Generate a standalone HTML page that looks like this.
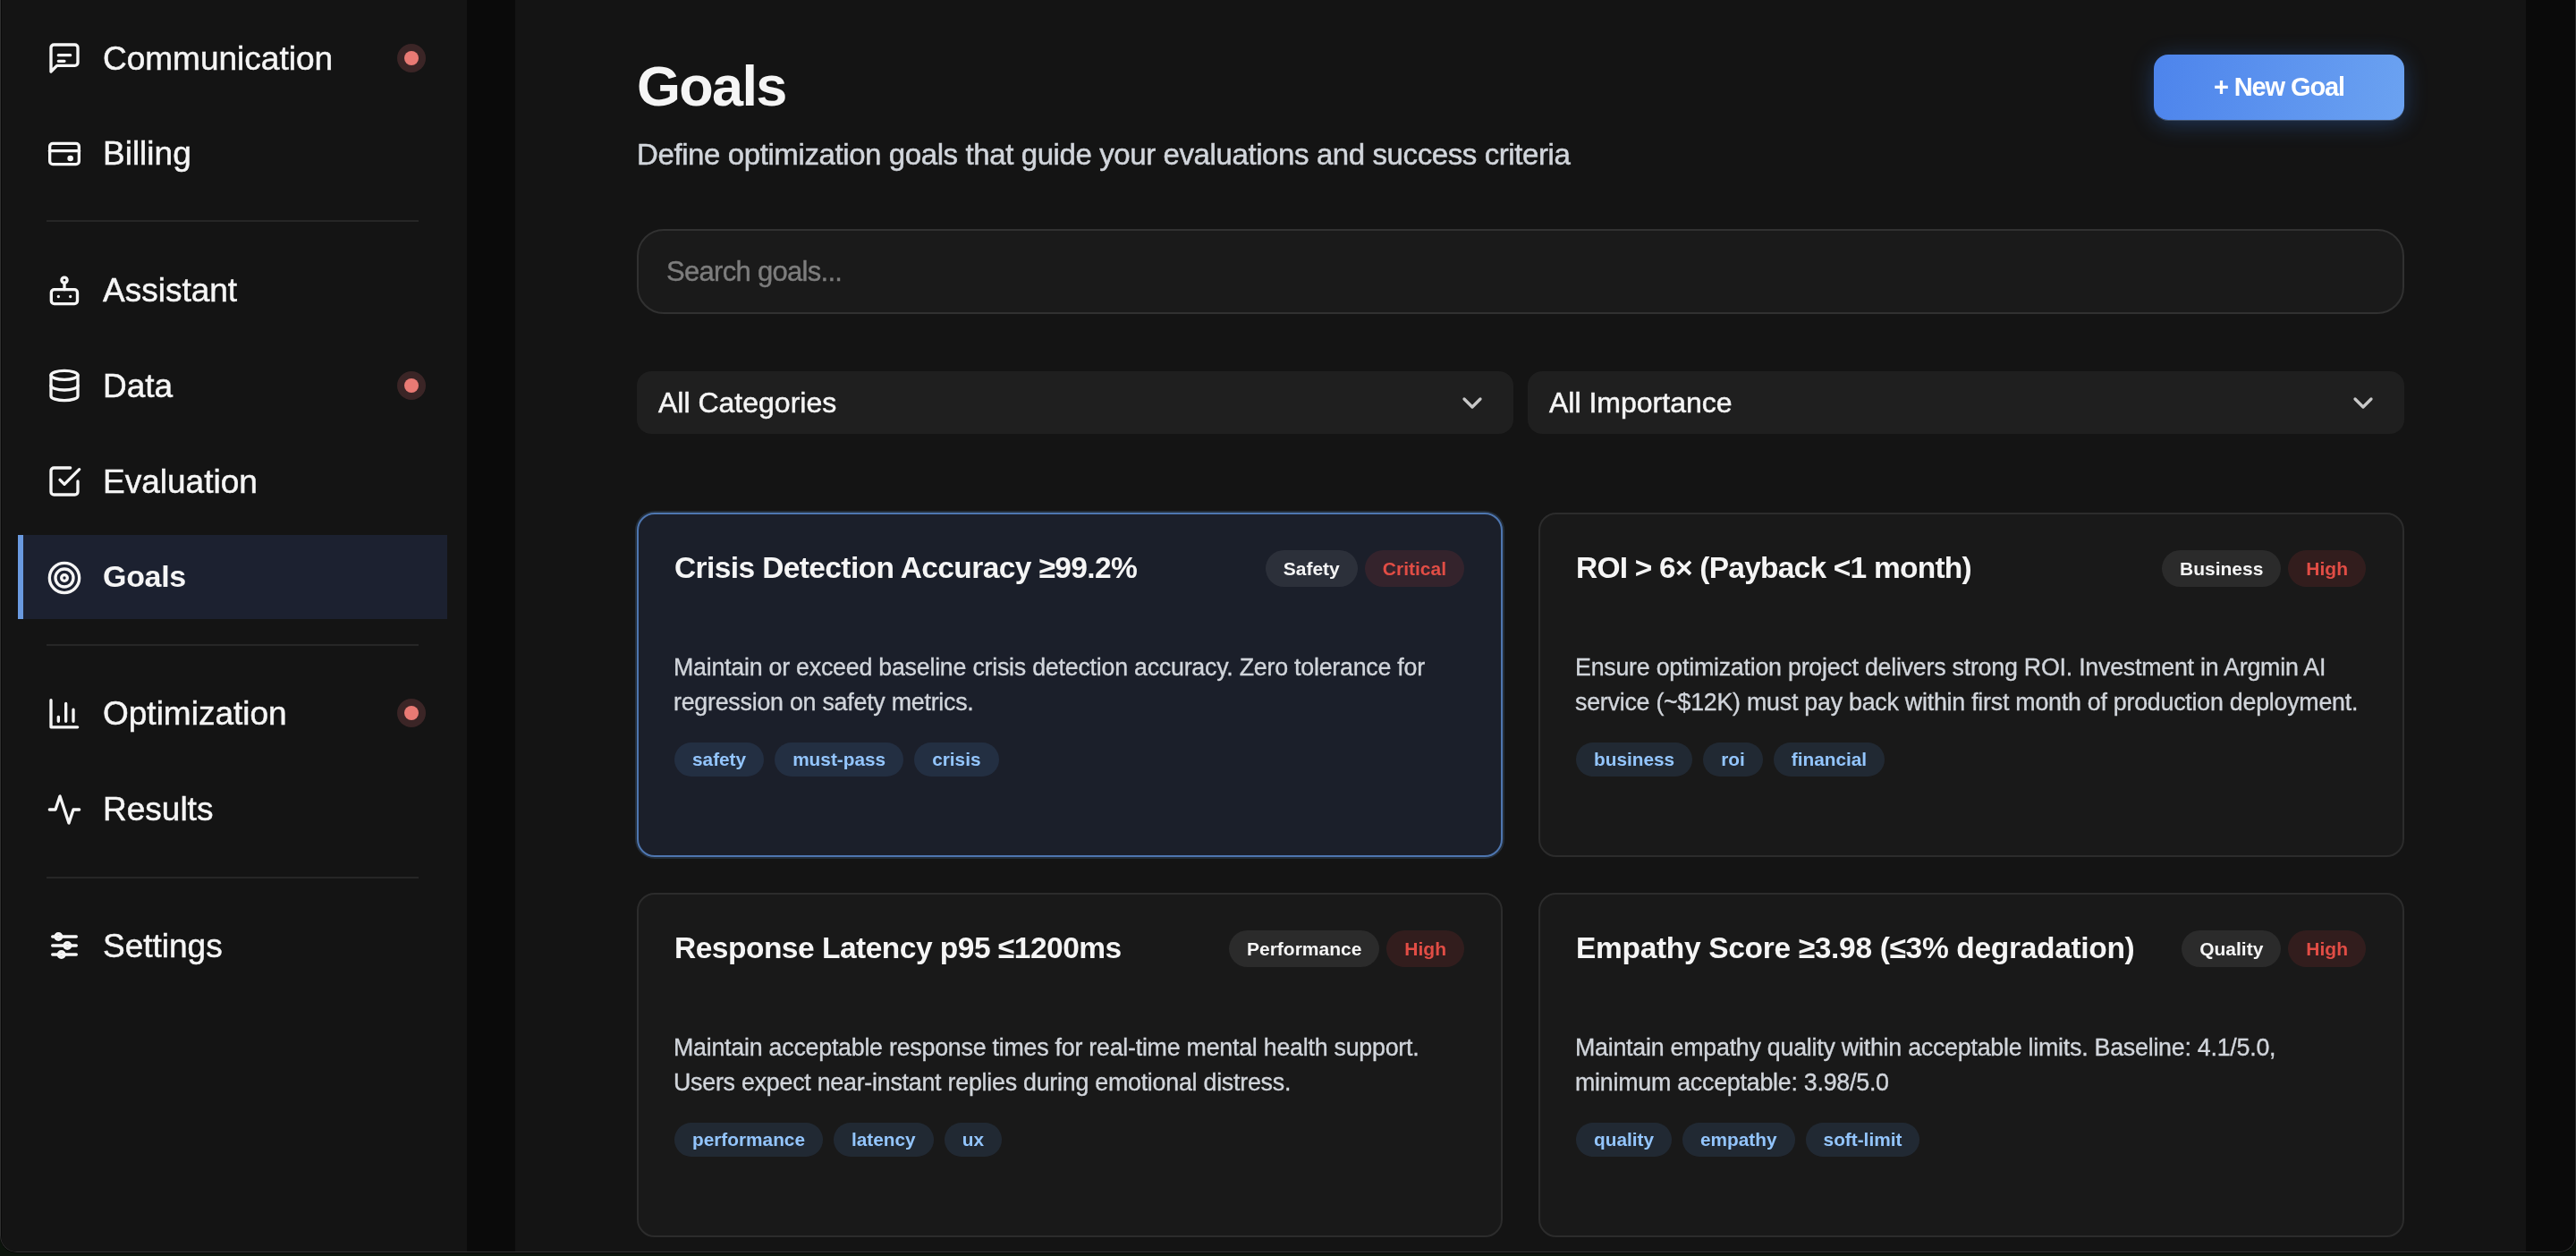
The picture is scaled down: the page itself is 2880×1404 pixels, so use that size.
<!DOCTYPE html>
<html><head><meta charset="utf-8">
<style>
*{margin:0;padding:0;box-sizing:border-box}
html,body{width:2880px;height:1404px;overflow:hidden;background:#0c140c;font-family:"Liberation Sans",sans-serif}
#win{will-change:transform;position:absolute;left:0;top:0;width:2880px;height:1400px;background:#0a0a0a;border:1px solid #303030;border-top:0;border-radius:0 0 19px 19px;overflow:hidden;box-shadow:0 1px 0 #050505}
#side{position:absolute;left:1px;top:0;width:520px;height:1399px;background:#141414}
#main{position:absolute;left:575px;top:0;width:2248px;height:1399px;background:#141414}
.nav{position:absolute;left:0;width:520px;height:94px;color:#f5f5f5;font-size:37px}
.nav .lbl{position:absolute;left:113px;top:2px;line-height:94px;white-space:nowrap}
.nav svg{position:absolute;left:50px;top:28px;width:40px;height:40px;fill:none;stroke:#f5f5f5;stroke-width:2;stroke-linecap:round;stroke-linejoin:round}
.nav.active{background:#1c2130;left:18px;width:480px}
.nav.active .lbl{left:95px;top:-1px;font-weight:700;font-size:34px;letter-spacing:-0.3px}
.nav.active svg{left:32px}
.nav.active::before{content:"";position:absolute;left:0;top:0;width:6px;height:94px;background:#6a9ae0}
.dot{position:absolute;left:450px;top:40px;width:16px;height:16px;border-radius:50%;background:#e97a74;box-shadow:0 0 0 8px #3b2526}
.div{position:absolute;left:50px;width:416px;height:2px;background:#262626}

.abs{position:absolute}
#title{position:absolute;left:136px;top:56px;font-size:63px;font-weight:700;color:#f5f5f5;letter-spacing:-1.7px;line-height:80px;white-space:nowrap}
#sub{position:absolute;left:136px;top:148px;font-size:33px;letter-spacing:-0.4px;color:#d1d5db;line-height:50px;white-space:nowrap}
#btn{position:absolute;left:1832px;top:61px;width:280px;height:73px;border-radius:16px;background:linear-gradient(100deg,#4d84ec,#6ba2f1);box-shadow:0 1px 0 rgba(110,130,160,0.5),0 4px 26px rgba(59,130,246,0.32);color:#fff;font-size:29px;font-weight:700;text-align:center;line-height:73px;letter-spacing:-1.1px}
#search{position:absolute;left:136px;top:256px;width:1976px;height:95px;border-radius:30px;background:#1a1a1a;border:2px solid #313131}
#search span{position:absolute;left:31px;top:0;line-height:92px;font-size:31px;letter-spacing:-0.7px;color:#7d7d7d}
.dd{position:absolute;top:415px;width:980px;height:70px;border-radius:16px;background:#1f1f1f;color:#f5f5f5;font-size:32px}
.dd span{position:absolute;left:24px;line-height:70px}
.dd svg{position:absolute;right:34px;top:27px;width:24px;height:18px;fill:none;stroke:#c8c8c8;stroke-width:3.3;stroke-linecap:round;stroke-linejoin:round}
.card{position:absolute;width:968px;height:385px;border-radius:20px;background:#191919;border:2px solid #2c2c2c}
.card.sel{background:#1b1f2a;border-color:#4e76b0;box-shadow:0 0 0 2px rgba(100,150,210,0.2)}
.card h3{position:absolute;left:40px;top:40px;font-size:33.5px;font-weight:700;color:#f5f5f5;line-height:40px;white-space:nowrap}
.pills{position:absolute;right:41px;top:40px;display:flex;gap:8px}
.pill{height:41px;line-height:41px;padding:0 20px;border-radius:21px;font-size:21px;font-weight:700;color:#f5f5f5;background:rgba(255,255,255,0.08)}
.pill.red{color:#e14d45;background:rgba(239,68,68,0.12)}
.desc{position:absolute;left:39px;top:152px;width:920px;white-space:nowrap;font-size:26.8px;letter-spacing:-0.24px;line-height:39px;color:#d1d5db}
.tags{position:absolute;left:40px;top:255px;display:flex;gap:12px}
.tag{height:38px;line-height:38px;padding:0 20px;border-radius:19px;font-size:20.8px;font-weight:700;color:#93c5fd;background:rgba(96,165,250,0.12)}

.nav .lbl{-webkit-text-stroke:0.5px #f5f5f5}
.nav.active .lbl{-webkit-text-stroke:0}
#sub{-webkit-text-stroke:0.5px #d1d5db}
.dd span{-webkit-text-stroke:0.5px #f5f5f5}
.desc{-webkit-text-stroke:0.35px #d1d5db}
#search span{-webkit-text-stroke:0.4px #7d7d7d}
</style></head><body>
<div id="win">
<div id="side">
<div class="nav" style="top:17px"><svg viewBox="0 0 24 24"><path d="M21 15a2 2 0 0 1-2 2H7l-4 4V5a2 2 0 0 1 2-2h14a2 2 0 0 1 2 2z"/><path d="M8 10h8M8 14h4"/></svg><span class="lbl">Communication</span><span class="dot"></span></div>
<div class="nav" style="top:123px"><svg viewBox="0 0 24 24" style="top:29px"><rect x="2.2" y="5" width="19.6" height="14" rx="2"/><path d="M2 10h20"/><circle cx="16" cy="15" r="1"/></svg><span class="lbl">Billing</span></div>
<div class="div" style="top:246px"></div>
<div class="nav" style="top:276px"><svg viewBox="0 0 24 24"><rect x="3.2" y="11.8" width="17.5" height="9.6" rx="2"/><circle cx="12" cy="5.5" r="1.85"/><path d="M12 7.3v4.5"/><path d="M8 16.5h.01M16 16.5h.01"/></svg><span class="lbl">Assistant</span></div>
<div class="nav" style="top:383px"><svg viewBox="0 0 24 24"><ellipse cx="12" cy="5" rx="9" ry="3"/><path d="M3 5v14a9 3 0 0 0 18 0V5"/><path d="M3 12a9 3 0 0 0 18 0"/></svg><span class="lbl">Data</span><span class="dot"></span></div>
<div class="nav" style="top:490px"><svg viewBox="0 0 24 24"><path d="m9 11 3 3L22 4"/><path d="M21 12v7a2 2 0 0 1-2 2H5a2 2 0 0 1-2-2V5a2 2 0 0 1 2-2h11"/></svg><span class="lbl">Evaluation</span></div>
<div class="nav active" style="top:598px"><svg viewBox="0 0 24 24"><circle cx="12" cy="12" r="10"/><circle cx="12" cy="12" r="6"/><circle cx="12" cy="12" r="2"/></svg><span class="lbl">Goals</span></div>
<div class="div" style="top:720px"></div>
<div class="nav" style="top:749px"><svg viewBox="0 0 24 24"><path d="M3 3.4V21.5H20.8"/><path d="M8 14.6v3M13 5.7v11.9M18 9.7v7.9"/></svg><span class="lbl">Optimization</span><span class="dot"></span></div>
<div class="nav" style="top:856px"><svg viewBox="0 0 24 24" style="top:29px"><path d="M22 12h-4l-3 9L9 3l-3 9H2"/></svg><span class="lbl">Results</span></div>
<div class="div" style="top:980px"></div>
<div class="nav" style="top:1009px"><svg viewBox="0 0 24 24"><path d="M4 6h16M4 12h16M4 18h16"/><circle cx="8" cy="6" r="2"/><circle cx="14" cy="12" r="2"/><circle cx="10" cy="18" r="2"/></svg><span class="lbl">Settings</span></div>
</div>
<div id="main">
<div id="title">Goals</div>
<div id="sub">Define optimization goals that guide your evaluations and success criteria</div>
<div id="btn">+ New Goal</div>
<div id="search"><span>Search goals...</span></div>
<div class="dd" style="left:136px"><span>All Categories</span><svg viewBox="0 0 24 18"><path d="M3 4l9 9 9-9"/></svg></div>
<div class="dd" style="left:1132px"><span>All Importance</span><svg viewBox="0 0 24 18"><path d="M3 4l9 9 9-9"/></svg></div>
<div class="card sel" style="left:136px;top:573px"><h3 style="letter-spacing:-0.61px">Crisis Detection Accuracy ≥99.2%</h3><div class="pills"><span class="pill">Safety</span><span class="pill red">Critical</span></div>
<div class="desc">Maintain or exceed baseline crisis detection accuracy. Zero tolerance for<br>regression on safety metrics.</div>
<div class="tags"><span class="tag">safety</span><span class="tag">must-pass</span><span class="tag">crisis</span></div></div>
<div class="card" style="left:1144px;top:573px"><h3 style="letter-spacing:-0.77px">ROI &gt; 6× (Payback &lt;1 month)</h3><div class="pills"><span class="pill">Business</span><span class="pill red">High</span></div>
<div class="desc">Ensure optimization project delivers strong ROI. Investment in Argmin AI<br>service (~$12K) must pay back within first month of production deployment.</div>
<div class="tags"><span class="tag">business</span><span class="tag">roi</span><span class="tag">financial</span></div></div>
<div class="card" style="left:136px;top:998px"><h3 style="letter-spacing:-0.5px">Response Latency p95 ≤1200ms</h3><div class="pills"><span class="pill">Performance</span><span class="pill red">High</span></div>
<div class="desc">Maintain acceptable response times for real-time mental health support.<br>Users expect near-instant replies during emotional distress.</div>
<div class="tags"><span class="tag">performance</span><span class="tag">latency</span><span class="tag">ux</span></div></div>
<div class="card" style="left:1144px;top:998px"><h3 style="letter-spacing:-0.32px">Empathy Score ≥3.98 (≤3% degradation)</h3><div class="pills"><span class="pill">Quality</span><span class="pill red">High</span></div>
<div class="desc">Maintain empathy quality within acceptable limits. Baseline: 4.1/5.0,<br>minimum acceptable: 3.98/5.0</div>
<div class="tags"><span class="tag">quality</span><span class="tag">empathy</span><span class="tag">soft-limit</span></div></div>
</div>

</div>
</body></html>
